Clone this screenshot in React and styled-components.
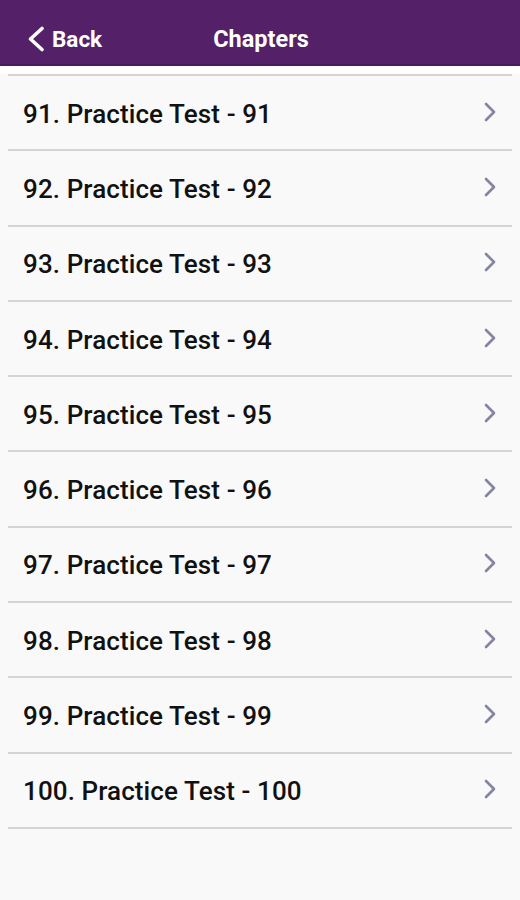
import React from "react";
import styled, { createGlobalStyle } from "styled-components";

const GlobalStyle = createGlobalStyle`
  html, body {
    margin: 0;
    padding: 0;
    background: #f9f9f9;
    font-family: Roboto, "Noto Sans", sans-serif;
  }
`;

const Page = styled.div`
  width: 520px;
  min-height: 900px;
  background: #f9f9f9;
`;

const Header = styled.header`
  position: relative;
  box-sizing: border-box;
  height: 66px;
  padding-top: 14px;
  background: #542067;
  border-bottom: 2px solid #4a1a5c;
  display: flex;
  align-items: center;
  justify-content: center;
  color: #fff;
`;

const BackButton = styled.button`
  position: absolute;
  left: 26px;
  top: 14px;
  bottom: 0;
  display: flex;
  align-items: center;
  gap: 5px;
  padding: 0;
  border: none;
  background: transparent;
  color: #fff;
  font-family: Roboto, sans-serif;
  font-weight: 700;
  font-size: 22.5px;
  cursor: pointer;
  svg {
    width: 21px;
    height: 26px;
  }
`;

const Title = styled.h1`
  margin: 0 0 0 2px;
  font-size: 23.5px;
  font-weight: 700;
`;

const TopStrip = styled.div`
  height: 8px;
  background: #fff;
`;

const List = styled.ul`
  list-style: none;
  margin: 0 8px;
  padding: 0;
  border-top: 2px solid #d4d4d4;
`;

const Row = styled.li`
  height: 73.3px;
  display: flex;
  align-items: center;
  justify-content: space-between;
  padding: 2px 16px 0 15px;
  box-sizing: border-box;
  height: 75.3px;
  border-bottom: 2px solid #d4d4d4;
  cursor: pointer;
`;

const Label = styled.span`
  font-size: 26px;
  font-weight: 500;
  color: #111;
  letter-spacing: 0.1px;
`;

const Chevron = styled.svg`
  width: 12px;
  height: 20px;
  color: #8585a3;
  margin-top: -4px;
`;

const chapters = Array.from({ length: 10 }, (_, i) => 91 + i);

export default function App() {
  return (
    <Page>
      <GlobalStyle />
      <Header>
        <BackButton>
          <svg viewBox="0 0 21 26" fill="none" stroke="currentColor" strokeWidth="3.6" strokeLinecap="round" strokeLinejoin="round">
            <path d="M16 2.5 L4.5 13 L16 23.5" />
          </svg>
          Back
        </BackButton>
        <Title>Chapters</Title>
      </Header>
      <TopStrip />
      <List>
        {chapters.map((n) => (
          <Row key={n}>
            <Label>
              {n}. Practice Test - {n}
            </Label>
            <Chevron viewBox="0 0 12 20" fill="none" stroke="currentColor" strokeWidth="2.6" strokeLinecap="round" strokeLinejoin="round">
              <path d="M2 2 L10 10 L2 18" />
            </Chevron>
          </Row>
        ))}
      </List>
    </Page>
  );
}
